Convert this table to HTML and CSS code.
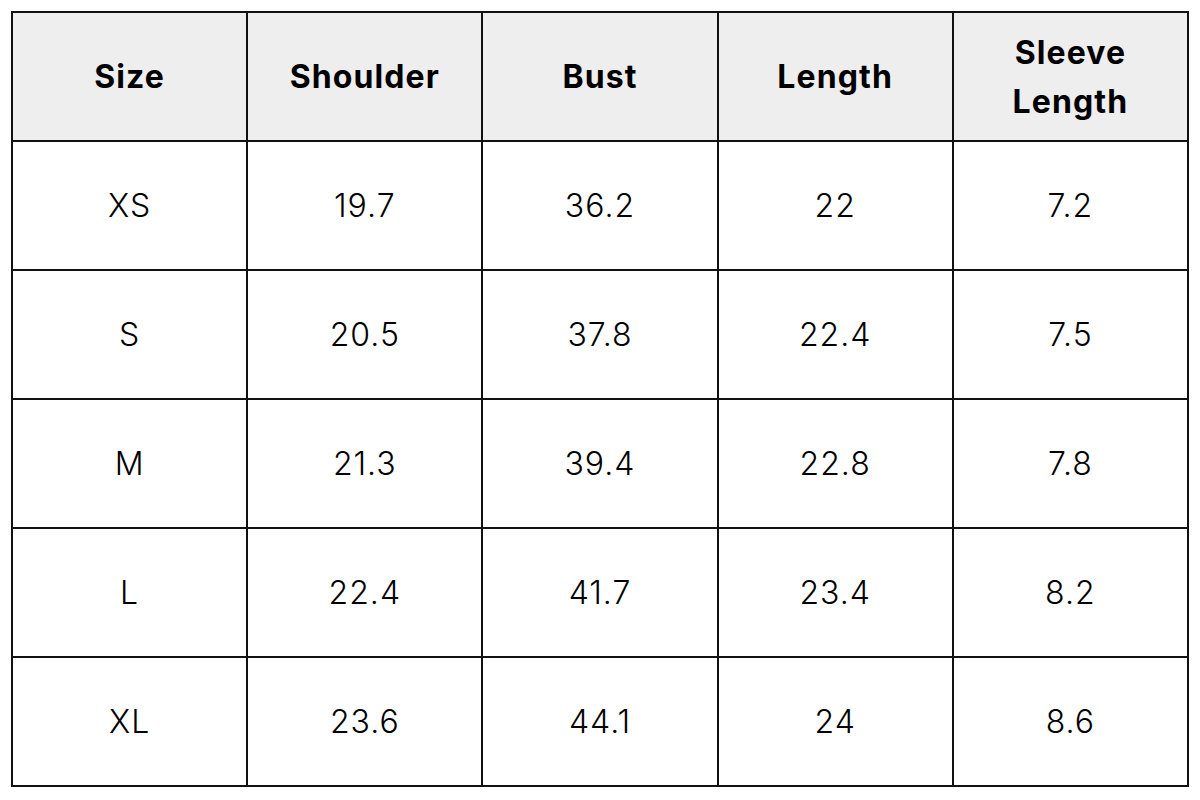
FILE: index.html
```html
<!DOCTYPE html>
<html>
<head>
<meta charset="utf-8">
<link rel="stylesheet" href="styles.css">
</head>
<body>
<table class="size-table">
  <thead>
    <tr>
      <th>Size</th>
      <th>Shoulder</th>
      <th>Bust</th>
      <th>Length</th>
      <th>Sleeve<br>Length</th>
    </tr>
  </thead>
  <tbody>
    <tr><td>XS</td><td>19.7</td><td>36.2</td><td>22</td><td>7.2</td></tr>
    <tr><td>S</td><td>20.5</td><td>37.8</td><td>22.4</td><td>7.5</td></tr>
    <tr><td>M</td><td>21.3</td><td>39.4</td><td>22.8</td><td>7.8</td></tr>
    <tr><td>L</td><td>22.4</td><td>41.7</td><td>23.4</td><td>8.2</td></tr>
    <tr><td>XL</td><td>23.6</td><td>44.1</td><td>24</td><td>8.6</td></tr>
  </tbody>
</table>
</body>
</html>
```
FILE: styles.css
```css
html, body {
  margin: 0;
  padding: 0;
  background: #ffffff;
}
body {
  padding: 11px 0 0 11px;
  font-family: Inter, "Open Sans", "Liberation Sans", sans-serif;
  color: #000;
}
.size-table {
  border-collapse: collapse;
  table-layout: fixed;
  width: 1178px;
}
.size-table th,
.size-table td {
  border: 2px solid #111;
  text-align: center;
  vertical-align: middle;
  padding: 0;
  height: 127px;
  font-size: 32px;
  line-height: 49px;
}
.size-table th {
  background: #eeeeee;
  font-weight: 700;
  letter-spacing: 1.1px;
}
.size-table td {
  font-weight: 300;
  letter-spacing: 1px;
}
```
